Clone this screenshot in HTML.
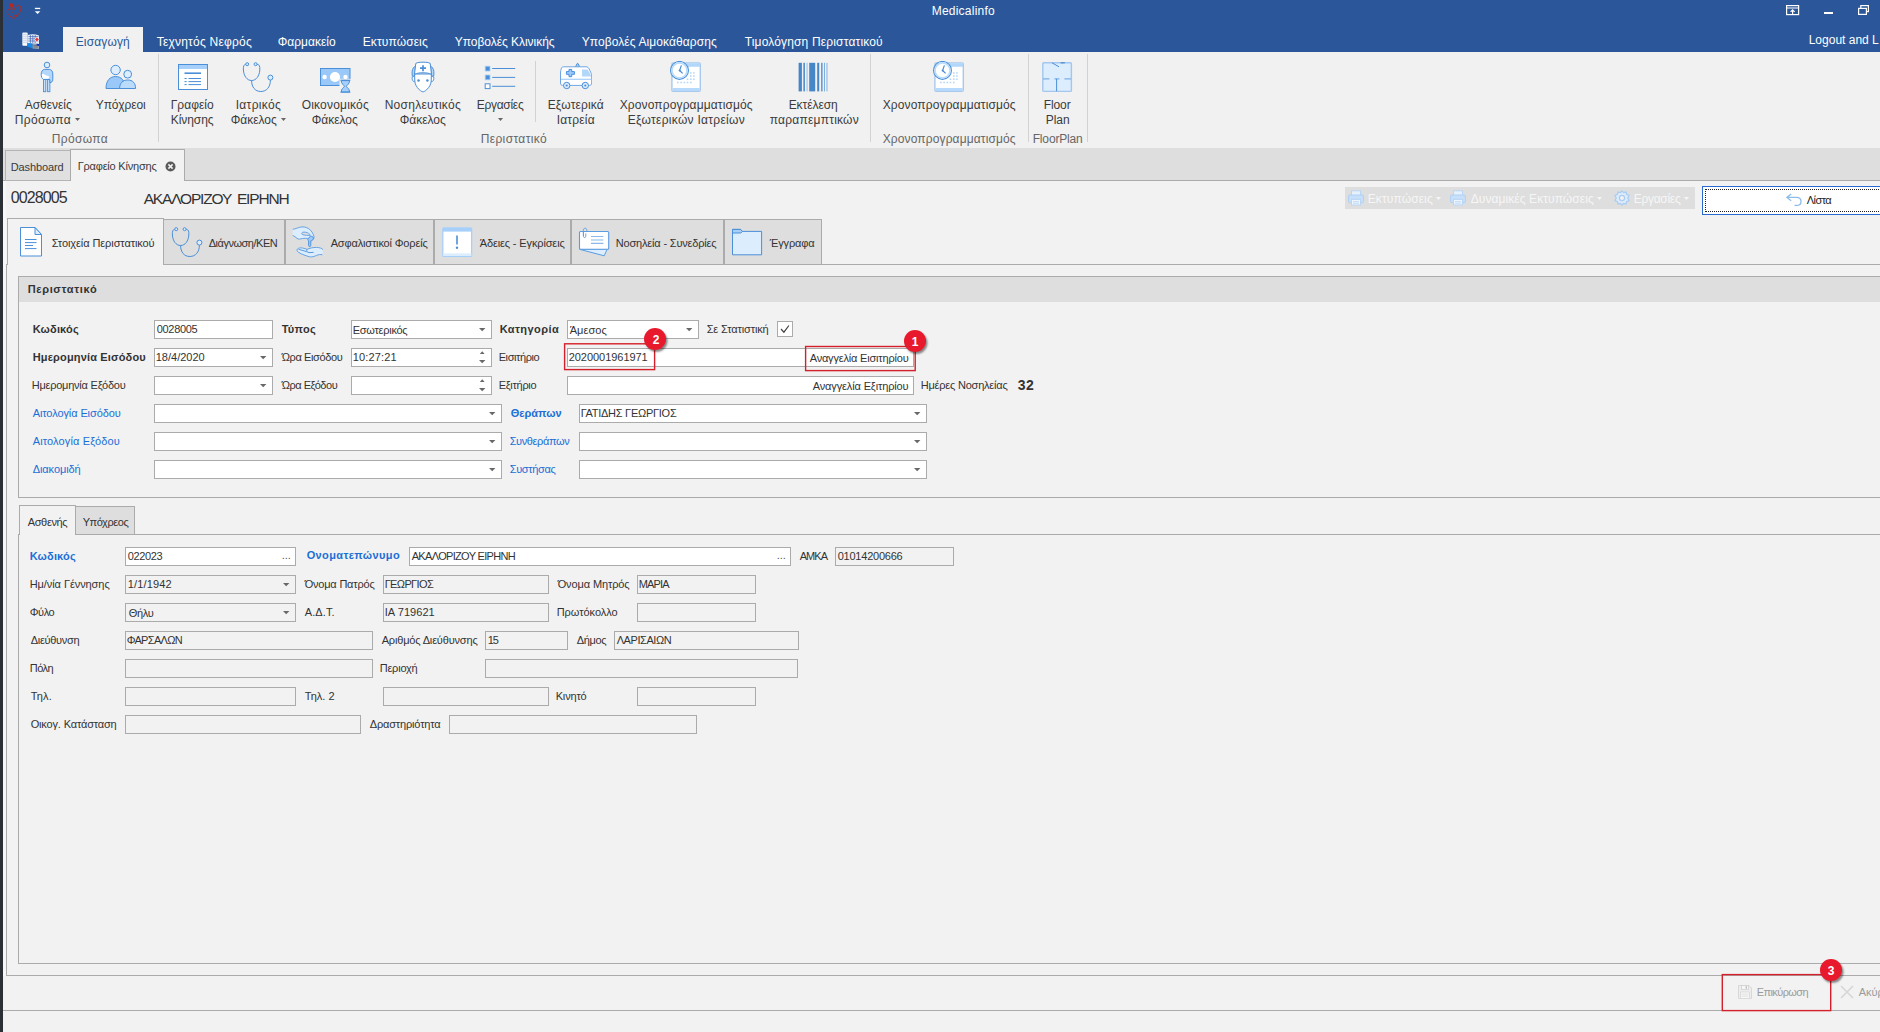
<!DOCTYPE html>
<html lang="el"><head><meta charset="utf-8"><title>Medicalinfo</title>
<style>
html,body{margin:0;padding:0}
body{width:1880px;height:1032px;overflow:hidden;position:relative;background:#F2F2F2;font-family:"Liberation Sans",sans-serif;color:#333333}
.b{position:absolute;box-sizing:border-box;display:block}
.t{position:absolute;white-space:nowrap;line-height:1;font-family:"Liberation Sans",sans-serif}
.s{font-family:"Liberation Serif",serif}
</style></head><body>
<div class="b" style="left:0px;top:0px;width:3px;height:1032px;background:#2B3037;"></div>
<div class="b" style="left:3px;top:0px;width:1877px;height:52px;background:#2B579A;"></div>
<div class="b" style="left:3px;top:52px;width:1877px;height:96px;background:#F1F1F1;"></div>
<div class="b" style="left:3px;top:148px;width:1877px;height:33px;background:#DEDEDE;"></div>
<div class="b" style="left:3px;top:180px;width:1877px;height:1px;background:#ABABAB;"></div>
<div class="b" style="left:3px;top:181px;width:1877px;height:851px;background:#F2F2F2;"></div>
<div class="b" style="left:3px;top:181px;width:3px;height:795px;background:#F7F7F7;"></div>
<svg class="b" style="left:6px;top:2px" width="17" height="18" viewBox="0 0 17 18"><path d="M6.8 7.2 C4.6 6.2 1.6 7 1.2 9.4 C0.9 12 4 14.6 7.8 16.6 C11 14.2 15 10.4 14.9 6.2 C14.8 3.2 12.6 2.6 10.8 4 C9 5.4 7.4 7.8 6.8 10.8" fill="none" stroke="#B8281E" stroke-width=".9"/><ellipse cx="5.6" cy="3.5" rx="1.7" ry="2.6" transform="rotate(-8 5.6 3.5)" fill="#B8281E"/><circle cx="9.6" cy="13.6" r="1.2" fill="#B8281E"/></svg>
<svg class="b" style="left:34px;top:7px" width="8" height="8" viewBox="0 0 8 8"><rect x="0.9" y="0.8" width="5.3" height="1.3" fill="#fff"/><path d="M0.8 4.3 L6.3 4.3 L3.55 7.1 Z" fill="#fff"/></svg>
<svg class="b" style="left:1786px;top:5px" width="14" height="11" viewBox="0 0 14 11"><rect x="0.6" y="0.6" width="12" height="9" fill="none" stroke="#fff" stroke-width="1.2"/><line x1="0.6" y1="3" x2="12.6" y2="3" stroke="#fff" stroke-width="1"/><path d="M6.6 9 L6.6 5 M4.6 6.8 L6.6 4.8 L8.6 6.8" fill="none" stroke="#fff" stroke-width="1.2"/></svg>
<div class="b" style="left:1824px;top:12px;width:9px;height:2px;background:#fff;"></div>
<svg class="b" style="left:1858px;top:5px" width="12" height="11" viewBox="0 0 12 11"><rect x="2.8" y="0.6" width="7.6" height="6" fill="none" stroke="#fff" stroke-width="1.2"/><rect x="0.6" y="3.4" width="7.8" height="6" fill="#2B579A" stroke="#fff" stroke-width="1.2"/></svg>
<svg class="b" style="left:22px;top:32px" width="18" height="18" viewBox="0 0 18 18"><rect x="0.3" y="0.4" width="5.4" height="13.4" rx="1" fill="#EEF2F8"/><path d="M1 2.4h4M1 4.4h4M1 6.4h4M1 8.4h4M1 10.4h4" stroke="#C3D1E6" stroke-width=".7"/><rect x="1" y="11.6" width="4" height="1.6" fill="#fff"/><path d="M5.8 3 C9 2 13 2 17 3.4 L17 12 L5.8 11.4 Z" fill="#E9EFF8"/><path d="M6.4 4.6h10M6.4 6.8h10M6.4 9h10M8.4 3v8M10.8 3v8M13.2 3v8" stroke="#3D63B0" stroke-width=".7"/><circle cx="14.9" cy="7.5" r="2.3" fill="#DDE9F8"/><path d="M14.9 5.4 L16.8 7.5 L14.9 9.6 L13 7.5 Z" fill="#E8312F"/><path d="M5.2 11 L10.6 11.6 L10.6 16.6 L5.2 14.6 Z" fill="#1787EA"/><path d="M10.6 11.6 L17 12 L17 17 L10.6 16.6 Z" fill="#9AA3AE"/><path d="M14.6 11.8 L17 12 L17 14 L14.6 13.8 Z" fill="#0A2FC0"/><path d="M11.4 13.4h4.6M11.4 15h4.6" stroke="#5A5F66" stroke-width=".7"/></svg>
<div class="b" style="left:63px;top:27px;width:80px;height:26px;background:#F1F1F1;"></div>
<div class="b" style="left:158px;top:54px;width:1px;height:88px;background:#D2D2D2;"></div>
<div class="b" style="left:535px;top:61px;width:1px;height:61px;background:#D2D2D2;"></div>
<div class="b" style="left:870px;top:54px;width:1px;height:88px;background:#D2D2D2;"></div>
<div class="b" style="left:1028px;top:54px;width:1px;height:88px;background:#D2D2D2;"></div>
<div class="b" style="left:1087px;top:54px;width:1px;height:88px;background:#D2D2D2;"></div>
<svg class="b" style="left:75px;top:118px" width="5" height="3" viewBox="0 0 5 3"><path d="M0 0 L5 0 L2.5 3 Z" fill="#666"/></svg>
<svg class="b" style="left:281px;top:118px" width="5" height="3" viewBox="0 0 5 3"><path d="M0 0 L5 0 L2.5 3 Z" fill="#666"/></svg>
<svg class="b" style="left:498px;top:118px" width="5" height="3" viewBox="0 0 5 3"><path d="M0 0 L5 0 L2.5 3 Z" fill="#666"/></svg>
<svg class="b" style="left:31px;top:61px" width="32" height="32" viewBox="0 0 32 32"><circle cx="16" cy="4" r="2.8" fill="#DCEDFE" stroke="#4A8FD8" stroke-width="1"/><rect x="12.5" y="18" width="2.3" height="12.7" fill="#C4E0FC" stroke="#4A8FD8" stroke-width=".9"/><rect x="16.6" y="18" width="2.3" height="12.7" fill="#C4E0FC" stroke="#4A8FD8" stroke-width=".9"/><path d="M13.6 8.4 L18.4 8.4 C20.4 8.4 21.8 10.4 21.8 13 L21.8 18.8 C21.8 20.4 20.4 21.6 18.9 21.8 L18.9 18.5 L12.5 18.5 C10.9 17.6 10.2 15.6 10.2 13.4 C10.2 10.4 11.6 8.4 13.6 8.4 Z" fill="#B3D7FB" stroke="#4A8FD8" stroke-width="1"/><path d="M10.9 13.3 C12.4 12.7 13.6 13.6 14.6 14.3 C15.8 15 17.2 14.7 18 15.4 C18.5 16.4 17.6 17.6 16.4 17.8 L12.3 17.8 C11.1 17 10.7 15 10.9 13.3 Z" fill="#fff"/></svg>
<svg class="b" style="left:105px;top:61px" width="32" height="32" viewBox="0 0 32 32"><circle cx="10.6" cy="9" r="4.7" fill="#DCEDFE" stroke="#4A8FD8" stroke-width="1"/><path d="M1 27.5 C1 19.5 5 15.5 10.6 15.5 C16.2 15.5 20.2 19.5 20.2 27.5 Z" fill="#9AC9F9" stroke="#4A8FD8" stroke-width="1"/><circle cx="22.7" cy="13.2" r="3.9" fill="#DCEDFE" stroke="#4A8FD8" stroke-width="1"/><path d="M14.6 27.5 C14.6 22 17.8 19 22.7 19 C27.6 19 30.6 22 30.6 27.5 Z" fill="#BBDBFB" stroke="#4A8FD8" stroke-width="1"/></svg>
<svg class="b" style="left:177px;top:61px" width="32" height="32" viewBox="0 0 32 32"><rect x="1.5" y="3.5" width="29" height="25" fill="#fff" stroke="#4A8FD8" stroke-width="1"/><rect x="2" y="4" width="28" height="4" fill="#A6CFFA"/><path d="M7.5 12.2h16.5" stroke="#4A8FD8" stroke-width="1.6"/><path d="M7.5 17.5h2.2M11.5 17.5h12.5M7.5 20.6h2.2M11.5 20.6h12.5M7.5 23.6h2.2M11.5 23.6h12.5" stroke="#4A8FD8" stroke-width="1"/></svg>
<svg class="b" style="left:242px;top:61px" width="32" height="32" viewBox="0 0 32 32"><path d="M4.2 3.3 C1.6 3.3 1.2 5.5 1.4 9 C1.8 15 5 19.5 9.6 19.5 C14.2 19.5 17.4 15 17.8 9 C18 5.5 17.6 3.3 15 3.3" fill="none" stroke="#4A8FD8" stroke-width="1"/><path d="M9.6 19.5 C9.6 26 13 30.5 18.8 30.5 C24.6 30.5 28.4 26 28.4 19.2" fill="none" stroke="#4A8FD8" stroke-width="1"/><circle cx="5.2" cy="3.2" r="1.5" fill="#DCEDFE" stroke="#4A8FD8" stroke-width="1"/><circle cx="13.6" cy="3.2" r="1.5" fill="#DCEDFE" stroke="#4A8FD8" stroke-width="1"/><circle cx="28.4" cy="16.6" r="2.5" fill="#DCEDFE" stroke="#4A8FD8" stroke-width="1"/></svg>
<svg class="b" style="left:319px;top:61px" width="32" height="32" viewBox="0 0 32 32"><rect x="1.5" y="7.5" width="29.5" height="17" fill="#9AC9F9" stroke="#4A8FD8" stroke-width="1"/><circle cx="16" cy="16" r="5.1" fill="#fff"/><circle cx="5.6" cy="16" r="2.2" fill="#fff"/><circle cx="26.5" cy="16" r="2.2" fill="#fff"/><rect x="20.5" y="17.8" width="12" height="14" fill="#F1F1F1"/><path d="M22.2 19.6 L30.6 19.6 C30.6 23 27.8 24 27.4 25.3 C27.8 26.6 30.6 27.6 30.6 31 L22.2 31 C22.2 27.6 25 26.6 25.4 25.3 C25 24 22.2 23 22.2 19.6 Z" fill="#A6CFFA" stroke="#4A8FD8" stroke-width="1"/><path d="M21.4 19.2h10M21.4 31.2h10" stroke="#4A8FD8" stroke-width="1" stroke-width="1.2"/></svg>
<svg class="b" style="left:407px;top:61px" width="32" height="32" viewBox="0 0 32 32"><path d="M7.6 5.6 C5.6 7.4 5 9.6 5.1 12 L5.3 15.4 L7.8 15 L8.4 6 Z M24.4 5.6 C26.4 7.4 27 9.6 26.9 12 L26.7 15.4 L24.2 15 L23.6 6 Z" fill="#B3D7FB" stroke="#4A8FD8" stroke-width="1"/><path d="M7.4 15.2 C5.2 14.6 4.8 17 5.4 18.8 C5.9 20.2 6.8 20.8 7.8 20.6 M24.6 15.2 C26.8 14.6 27.2 17 26.6 18.8 C26.1 20.2 25.2 20.8 24.2 20.6" fill="#fff" stroke="#4A8FD8" stroke-width="1"/><path d="M7.6 13 L7.8 20 C8 23 9.4 26 12.4 28.8 C13.8 30 15 30.8 16 30.8 C17 30.8 18.2 30 19.6 28.8 C22.6 26 24 23 24.2 20 L24.4 13 Z" fill="#fff" stroke="#4A8FD8" stroke-width="1"/><path d="M8.8 2.4 C10.4 1.4 13 1.2 16 1.2 C19 1.2 21.6 1.4 23.2 2.4 L24.5 13.2 C21.6 12 18.8 11.8 16 11.8 C13.2 11.8 10.4 12 7.5 13.2 Z" fill="#fff" stroke="#4A8FD8" stroke-width="1"/><path d="M16 4.2v6M13 7.2h6" stroke="#4A8FD8" stroke-width="1.7"/><circle cx="11.5" cy="19.4" r="1.25" fill="#4A8FD8"/><circle cx="20.4" cy="19.4" r="1.25" fill="#4A8FD8"/></svg>
<svg class="b" style="left:484px;top:61px" width="32" height="32" viewBox="0 0 32 32"><rect x="1.2" y="5.2" width="4.8" height="4.8" fill="#4A8FD8" stroke="#A6CFFA" stroke-width=".8"/><rect x="1.2" y="14" width="4.8" height="4.8" fill="#4A8FD8" stroke="#A6CFFA" stroke-width=".8"/><rect x="1.2" y="22.8" width="4.8" height="4.8" fill="#fff" stroke="#4A8FD8" stroke-width="1"/><path d="M8.2 7.5h23M8.2 16.4h23M8.2 25.3h23" stroke="#4A8FD8" stroke-width="1"/></svg>
<svg class="b" style="left:560px;top:61px" width="32" height="32" viewBox="0 0 32 32"><path d="M15.4 6 L17 2.8 C17.3 2.2 17.9 2.2 18.2 2.8 L19.8 6 Z" fill="#A6CFFA" stroke="#4A8FD8" stroke-width="1"/><path d="M3.5 5.8 L26 5.8 C27.6 5.8 28.4 6.6 29.2 8 L31.2 12.4 C31.6 13.2 31.7 14 31.7 15 L31.7 22 C31.7 23.6 30.8 24.4 29.4 24.4 L2.8 24.4 C1.4 24.4 0.5 23.6 0.5 22 L0.5 11 C0.5 9.6 1.2 9 1.2 8 C1.2 6.6 2.2 5.8 3.5 5.8 Z" fill="#fff" stroke="#6FA6E2" stroke-width="1"/><path d="M22 8.4 L27.6 8.4 L31 14.2 L31 15.6 L22 15.6 Z" fill="#B3D7FB"/><path d="M1 18.3h30.4" stroke="#A6CFFA" stroke-width="1.2"/><path d="M9 8.4h2.7v2.2h2.7v2.7h-2.7v2.4h-2.7v-2.4h-2.6v-2.7h2.6z" fill="#9CCAFA" stroke="#4A8FD8" stroke-width="1"/><circle cx="6.7" cy="24.5" r="3.2" fill="#DCEDFE" stroke="#4A8FD8" stroke-width="1"/><circle cx="6.7" cy="24.5" r="1.1" fill="#4A8FD8"/><circle cx="25.3" cy="24.5" r="3.2" fill="#DCEDFE" stroke="#4A8FD8" stroke-width="1"/><circle cx="25.3" cy="24.5" r="1.1" fill="#4A8FD8"/></svg>
<svg class="b" style="left:670px;top:61px" width="32" height="32" viewBox="0 0 32 32"><rect x="1.9" y="1.9" width="28.4" height="28.4" rx="1.2" fill="#fff" stroke="#A9C9EC" stroke-width="1.4"/><rect x="2.2" y="2.2" width="27.8" height="3.6" fill="#B3D7FB"/><rect x="2.6" y="27" width="27" height="3" fill="#B7D9FB"/><path d="M20.0 11.9h1.6M23.1 11.9h1.6M20.0 15.0h1.6M23.1 15.0h1.6M16.7 18.3h1.6M20.0 18.3h1.6M23.1 18.3h1.6M7.0 21.6h1.6M10.3 21.6h1.6M13.6 21.6h1.6M16.7 21.6h1.6M20.0 21.6h1.6" stroke="#B5D6F8" stroke-width="1.5"/><circle cx="9.5" cy="9.4" r="8.9" fill="#fff" stroke="#4A8FD8" stroke-width="1.2"/><circle cx="9.5" cy="9.4" r="7.5" fill="none" stroke="#B9DBFC" stroke-width="1.6"/><path d="M11.4 4.4 L9.6 9.5 L12.6 12.4" fill="none" stroke="#4A8FD8" stroke-width="1.2"/><circle cx="9.6" cy="9.5" r="1" fill="#4A8FD8"/></svg>
<svg class="b" style="left:933px;top:61px" width="32" height="32" viewBox="0 0 32 32"><rect x="1.9" y="1.9" width="28.4" height="28.4" rx="1.2" fill="#fff" stroke="#A9C9EC" stroke-width="1.4"/><rect x="2.2" y="2.2" width="27.8" height="3.6" fill="#B3D7FB"/><rect x="2.6" y="27" width="27" height="3" fill="#B7D9FB"/><path d="M20.0 11.9h1.6M23.1 11.9h1.6M20.0 15.0h1.6M23.1 15.0h1.6M16.7 18.3h1.6M20.0 18.3h1.6M23.1 18.3h1.6M7.0 21.6h1.6M10.3 21.6h1.6M13.6 21.6h1.6M16.7 21.6h1.6M20.0 21.6h1.6" stroke="#B5D6F8" stroke-width="1.5"/><circle cx="9.5" cy="9.4" r="8.9" fill="#fff" stroke="#4A8FD8" stroke-width="1.2"/><circle cx="9.5" cy="9.4" r="7.5" fill="none" stroke="#B9DBFC" stroke-width="1.6"/><path d="M11.4 4.4 L9.6 9.5 L12.6 12.4" fill="none" stroke="#4A8FD8" stroke-width="1.2"/><circle cx="9.6" cy="9.5" r="1" fill="#4A8FD8"/></svg>
<svg class="b" style="left:798px;top:61px" width="32" height="32" viewBox="0 0 32 32"><rect x="0.6" y="1.8" width="3.3" height="28.6" fill="#4787C8"/><rect x="5.4" y="1.8" width="1.5" height="28.6" fill="#4787C8"/><rect x="8.4" y="1.8" width="1.3" height="28.6" fill="#A9C8EA"/><rect x="11.2" y="1.8" width="6" height="28.6" fill="#4787C8"/><rect x="19.2" y="1.8" width="2" height="28.6" fill="#4787C8"/><rect x="23.1" y="1.8" width="1.5" height="28.6" fill="#5D97D2"/><rect x="26" y="1.8" width="1" height="28.6" fill="#7FADDC"/><rect x="28.2" y="1.8" width="1.5" height="28.6" fill="#A9C8EA"/></svg>
<svg class="b" style="left:1041px;top:61px" width="32" height="32" viewBox="0 0 32 32"><rect x="1.8" y="1.8" width="28.6" height="28.6" rx="1" fill="#DCEDFE" stroke="#A3C6EE" stroke-width="1.4"/><path d="M2 17.8h6.4M13.4 17.8h5M23.4 17.8h6.6" stroke="#7FB0E6" stroke-width="1.2"/><path d="M15.6 17.8v12.4" stroke="#4A8FD8" stroke-width="1"/><path d="M11 1.8 L18 5.8" stroke="#4A8FD8" stroke-width="1"/><path d="M19.6 1.8h4.2" stroke="#4A8FD8" stroke-width="1.3"/></svg>
<div class="b" style="left:5px;top:150px;width:66px;height:31px;background:#E0E0E0;border:1px solid #B4B4B4;"></div>
<div class="b" style="left:70px;top:149px;width:115px;height:32px;background:#F2F2F2;border:1px solid #ABABAB;border-bottom:none;"></div>
<svg class="b" style="left:165px;top:161px" width="11" height="11" viewBox="0 0 11 11"><circle cx="5.5" cy="5.5" r="5" fill="#5A5A5A"/><path d="M3.4 3.4 L7.6 7.6 M7.6 3.4 L3.4 7.6" stroke="#F2F2F2" stroke-width="1.5"/></svg>
<div class="b" style="left:1345px;top:187px;width:350px;height:22px;background:#DEDEDE;"></div>
<svg class="b" style="left:1436px;top:197px" width="5" height="3" viewBox="0 0 5 3"><path d="M0 0 L5 0 L2.5 3 Z" fill="#F6F6F6"/></svg>
<svg class="b" style="left:1597px;top:197px" width="5" height="3" viewBox="0 0 5 3"><path d="M0 0 L5 0 L2.5 3 Z" fill="#F6F6F6"/></svg>
<svg class="b" style="left:1684px;top:197px" width="5" height="3" viewBox="0 0 5 3"><path d="M0 0 L5 0 L2.5 3 Z" fill="#F6F6F6"/></svg>
<svg class="b" style="left:1348px;top:190px" width="16" height="16" viewBox="0 0 16 16"><rect x="3.5" y="0.8" width="9" height="5" fill="#E6F1FD" stroke="#B9D6F5" stroke-width="1"/><rect x="0.6" y="5" width="14.8" height="7.6" rx="1" fill="#C7DFF8" stroke="#B0D0F3" stroke-width="1"/><rect x="3.5" y="9.4" width="9" height="5.6" fill="#EEF5FD" stroke="#B9D6F5" stroke-width="1"/><path d="M5 11.6h6M5 13.2h6" stroke="#B9D6F5" stroke-width=".8"/></svg>
<svg class="b" style="left:1450px;top:190px" width="16" height="16" viewBox="0 0 16 16"><rect x="3.5" y="0.8" width="9" height="5" fill="#E6F1FD" stroke="#B9D6F5" stroke-width="1"/><rect x="0.6" y="5" width="14.8" height="7.6" rx="1" fill="#C7DFF8" stroke="#B0D0F3" stroke-width="1"/><rect x="3.5" y="9.4" width="9" height="5.6" fill="#EEF5FD" stroke="#B9D6F5" stroke-width="1"/><path d="M5 11.6h6M5 13.2h6" stroke="#B9D6F5" stroke-width=".8"/></svg>
<svg class="b" style="left:1614px;top:190px" width="16" height="16" viewBox="0 0 16 16"><g fill="none" stroke="#A9CDF3" stroke-width="1.3"><circle cx="8" cy="8" r="2.6"/><path d="M8 1 L9.6 2.6 L12 2 L12.6 4.4 L15 5.4 L13.8 8 L15 10.6 L12.6 11.6 L12 14 L9.6 13.4 L8 15 L6.4 13.4 L4 14 L3.4 11.6 L1 10.6 L2.2 8 L1 5.4 L3.4 4.4 L4 2 L6.4 2.6 Z" fill="#DDEBFA"/><circle cx="8" cy="8" r="2.6" fill="#F2F2F2"/></g></svg>
<div class="b" style="left:1702px;top:186px;width:190px;height:29px;background:#FFFFFF;border:1px solid #2A6BD1;"></div>
<div class="b" style="left:1705px;top:189px;width:190px;height:23px;border:1px dotted #222;"></div>
<svg class="b" style="left:1786px;top:193px" width="16" height="14" viewBox="0 0 16 14"><path d="M5.2 1 L0.8 4.4 L5.2 7.8 M0.8 4.4 L10.5 4.4 C13.5 4.4 15 6 15 8.4 C15 10.8 13.5 12.4 10.5 12.4 L8.5 12.4" fill="none" stroke="#8DBBEA" stroke-width="1.3"/></svg>
<div class="b" style="left:6px;top:264px;width:1874px;height:1px;background:#ABABAB;"></div>
<div class="b" style="left:6px;top:264px;width:1px;height:712px;background:#ABABAB;"></div>
<div class="b" style="left:6px;top:975px;width:1874px;height:1px;background:#ABABAB;"></div>
<div class="b" style="left:7px;top:218px;width:157px;height:47px;background:#F2F2F2;border:1px solid #ABABAB;border-bottom:none;"></div>
<div class="b" style="left:163px;top:219px;width:122px;height:46px;background:#DEDEDE;border:1px solid #ABABAB;"></div>
<div class="b" style="left:285px;top:219px;width:149px;height:46px;background:#DEDEDE;border:1px solid #ABABAB;"></div>
<div class="b" style="left:434px;top:219px;width:137px;height:46px;background:#DEDEDE;border:1px solid #ABABAB;"></div>
<div class="b" style="left:571px;top:219px;width:153px;height:46px;background:#DEDEDE;border:1px solid #ABABAB;"></div>
<div class="b" style="left:724px;top:219px;width:98px;height:46px;background:#DEDEDE;border:1px solid #ABABAB;"></div>
<svg class="b" style="left:19px;top:226px" width="24" height="32" viewBox="0 0 24 32"><path d="M1.5 1.5 L16 1.5 L22.5 8.5 L22.5 30 L1.5 30 Z" fill="#fff" stroke="#4A8FD8" stroke-width="1"/><path d="M16 1.5 L16 8.5 L22.5 8.5 Z" fill="#DCEDFE" stroke="#4A8FD8" stroke-width="1"/><path d="M6 13.5h11.5M6 16.6h11.5M6 19.5h8M6 22.6h11.5" stroke="#4A8FD8" stroke-width="1"/></svg>
<svg class="b" style="left:171px;top:226px" width="32" height="32" viewBox="0 0 32 32"><path d="M4.2 3.3 C1.6 3.3 1.2 5.5 1.4 9 C1.8 15 5 19.5 9.6 19.5 C14.2 19.5 17.4 15 17.8 9 C18 5.5 17.6 3.3 15 3.3" fill="none" stroke="#4A8FD8" stroke-width="1"/><path d="M9.6 19.5 C9.6 26 13 30.5 18.8 30.5 C24.6 30.5 28.4 26 28.4 19.2" fill="none" stroke="#4A8FD8" stroke-width="1"/><circle cx="5.2" cy="3.2" r="1.5" fill="#DCEDFE" stroke="#4A8FD8" stroke-width="1"/><circle cx="13.6" cy="3.2" r="1.5" fill="#DCEDFE" stroke="#4A8FD8" stroke-width="1"/><circle cx="28.4" cy="16.6" r="2.5" fill="#DCEDFE" stroke="#4A8FD8" stroke-width="1"/></svg>
<svg class="b" style="left:292px;top:226px" width="32" height="32" viewBox="0 0 32 32"><path d="M0.8 3.2 C3 3.2 5 2 7.5 1.3 C11 0.4 14 1 16.5 2.6 C19.5 4.4 21 7.4 22 10.6 C22.3 12 21.4 13.4 20 13.8 L17 13.2 C15 12 12.5 12.2 10.2 12.6 C8 13 6.6 13.6 5 12.4 C3.6 11.2 2.4 10 0.8 9.6 Z" fill="#DCEDFE"/><path d="M0.8 3.2 C3 3.2 5 2 7.5 1.3 C11 0.4 14 1 16.5 2.6 C19.5 4.4 21 7.4 22 10.6 C22.3 12 21.4 13.4 20 13.8 L17 13.2 C15 12 12.5 12.2 10.2 12.6 C8 13 6.6 13.6 5 12.4 C3.6 11.2 2.4 10 0.8 9.6" fill="none" stroke="#5B9BE0" stroke-width=".9"/><path d="M10.4 6.4 C12.4 5.8 15 6.2 16.6 7.4 C17.6 8.2 18.6 9 18.4 9.4 C16 9.6 13 9.2 11 8.8 C9.6 8.4 9.4 6.8 10.4 6.4 Z" fill="#DEDEDE" stroke="#5B9BE0" stroke-width=".9"/><path d="M16.4 12.6 C17 10.6 19.6 9.6 20.8 10.8 C22 12 21.4 14 19.8 14.6 L18.8 14.8 L18.8 19.6 C18.8 21 16.6 21 16.6 19.6 L16.6 14.8 C15.6 14.4 15.4 13.4 16.4 12.6 Z" fill="#9CCAFA" stroke="#4A8FD8" stroke-width=".9"/><path d="M30.4 28.8 C28.6 28.2 26.6 28.6 24.6 29.4 C22.4 30.4 20 31.2 17.6 30.8 C14.4 30 9.6 28.2 6.6 26.4 C5 25.4 4.6 24 5.4 23 C6.6 22 8.6 21.6 10.6 22 C12.4 22.4 14 23 15 23.4 C17.4 22.2 21 21.4 24.4 21.4 C27.4 21.4 29.6 22.2 31 23.6 Z" fill="#DCEDFE"/><path d="M30.4 28.8 C28.6 28.2 26.6 28.6 24.6 29.4 C22.4 30.4 20 31.2 17.6 30.8 C14.4 30 9.6 28.2 6.6 26.4 C5 25.4 4.6 24 5.4 23 C6.6 22 8.6 21.6 10.6 22 C12.4 22.4 14 23 15 23.4 C17.4 22.2 21 21.4 24.4 21.4 C27.4 21.4 29.6 22.2 31 23.6" fill="none" stroke="#5B9BE0" stroke-width=".9"/><path d="M6.6 23.4 C9.6 24 12.6 25 14.8 25.8 M14.8 23.6 C14.4 25.2 15.2 26.4 17 26.6 L21.6 26.4" fill="none" stroke="#4A8FD8" stroke-width=".9"/></svg>
<svg class="b" style="left:441px;top:226px" width="32" height="32" viewBox="0 0 32 32"><rect x="1.8" y="1.8" width="28.8" height="28.6" rx="1" fill="#fff" stroke="#A6CFFA" stroke-width="1.3"/><rect x="2" y="2" width="28.4" height="3.6" fill="#A6CFFA"/><rect x="2" y="27.4" width="28.4" height="2.6" fill="#DCEDFE"/><path d="M16 9.6v9" stroke="#4A8FD8" stroke-width="1.6"/><circle cx="16" cy="21.8" r="1.2" fill="#4A8FD8"/></svg>
<svg class="b" style="left:578px;top:226px" width="32" height="32" viewBox="0 0 32 32"><path d="M1.8 23.4 L26.2 29.8 L29.2 23.2 Z" fill="#DCEDFE" stroke="#5B9BE0" stroke-width="1"/><rect x="1.5" y="5.5" width="29.2" height="17.8" rx="1" fill="#fff" stroke="#5B9BE0" stroke-width="1.1"/><path d="M13 10.5h12.4M13 17.4h12.4" stroke="#8DB8E8" stroke-width="1.1"/><path d="M13 14h12.4" stroke="#B5D2F0" stroke-width="1.6"/><path d="M5.4 10 L5.4 4.2 C5.4 1.6 8.8 1.6 8.8 4.2 L8.8 5.4 M5.4 5 L5.4 10.2 C5.4 12 7.8 12 7.8 10.2 L7.8 7.4" fill="none" stroke="#5B9BE0" stroke-width=".9"/></svg>
<svg class="b" style="left:731px;top:226px" width="32" height="32" viewBox="0 0 32 32"><path d="M1.5 3.4 L9.6 3.4 L11.4 5.4 L30.6 5.4 L30.6 28.8 L1.5 28.8 Z" fill="#DCEDFE" stroke="#4A8FD8" stroke-width="1"/><path d="M1.5 3.4 L9.6 3.4 L11.4 5.4 L9.8 7 L1.5 7 Z" fill="#A6CFFA" stroke="#4A8FD8" stroke-width="1"/></svg>
<div class="b" style="left:18px;top:276px;width:1880px;height:222px;border:1px solid #ABABAB;"></div>
<div class="b" style="left:19px;top:277px;width:1861px;height:25px;background:#DEDEDE;"></div>
<div class="b" style="left:154px;top:320px;width:119px;height:19px;background:#FFFFFF;border:1px solid #ABABAB;"></div>
<div class="b" style="left:351px;top:320px;width:141px;height:19px;background:#FFFFFF;border:1px solid #ABABAB;"></div>
<svg class="b" style="left:479px;top:328px" width="7" height="4" viewBox="0 0 7 4"><path d="M0 0 L6.4 0 L3.2 3.2 Z" fill="#686868"/></svg>
<div class="b" style="left:567px;top:320px;width:132px;height:19px;background:#FFFFFF;border:1px solid #ABABAB;"></div>
<svg class="b" style="left:686px;top:328px" width="7" height="4" viewBox="0 0 7 4"><path d="M0 0 L6.4 0 L3.2 3.2 Z" fill="#686868"/></svg>
<div class="b" style="left:777px;top:321px;width:16px;height:16px;background:#fff;border:1px solid #ABABAB;"></div>
<svg class="b" style="left:780px;top:323px" width="11" height="11" viewBox="0 0 11 11"><path d="M1 6 L3.9 9.2 L8.9 2.5" fill="none" stroke="#444" stroke-width="1.2"/></svg>
<div class="b" style="left:154px;top:348px;width:119px;height:19px;background:#FFFFFF;border:1px solid #ABABAB;"></div>
<svg class="b" style="left:260px;top:356px" width="7" height="4" viewBox="0 0 7 4"><path d="M0 0 L6.4 0 L3.2 3.2 Z" fill="#686868"/></svg>
<div class="b" style="left:351px;top:348px;width:141px;height:19px;background:#FFFFFF;border:1px solid #ABABAB;"></div>
<svg class="b" style="left:479px;top:351px" width="7" height="3" viewBox="0 0 7 3"><path d="M0.8 3 L5.6 3 L3.2 0.3 Z" fill="#686868"/></svg>
<svg class="b" style="left:479px;top:360px" width="7" height="4" viewBox="0 0 7 4"><path d="M0 0 L6.4 0 L3.2 3.2 Z" fill="#686868"/></svg>
<div class="b" style="left:567px;top:348px;width:347px;height:19px;background:#FFFFFF;border:1px solid #ABABAB;"></div>
<div class="b" style="left:154px;top:376px;width:119px;height:19px;background:#FFFFFF;border:1px solid #ABABAB;"></div>
<svg class="b" style="left:260px;top:384px" width="7" height="4" viewBox="0 0 7 4"><path d="M0 0 L6.4 0 L3.2 3.2 Z" fill="#686868"/></svg>
<div class="b" style="left:351px;top:376px;width:141px;height:19px;background:#FFFFFF;border:1px solid #ABABAB;"></div>
<svg class="b" style="left:479px;top:379px" width="7" height="3" viewBox="0 0 7 3"><path d="M0.8 3 L5.6 3 L3.2 0.3 Z" fill="#686868"/></svg>
<svg class="b" style="left:479px;top:388px" width="7" height="4" viewBox="0 0 7 4"><path d="M0 0 L6.4 0 L3.2 3.2 Z" fill="#686868"/></svg>
<div class="b" style="left:567px;top:376px;width:347px;height:19px;background:#FFFFFF;border:1px solid #ABABAB;"></div>
<div class="b" style="left:154px;top:404px;width:348px;height:19px;background:#FFFFFF;border:1px solid #ABABAB;"></div>
<svg class="b" style="left:489px;top:412px" width="7" height="4" viewBox="0 0 7 4"><path d="M0 0 L6.4 0 L3.2 3.2 Z" fill="#686868"/></svg>
<div class="b" style="left:579px;top:404px;width:348px;height:19px;background:#FFFFFF;border:1px solid #ABABAB;"></div>
<svg class="b" style="left:914px;top:412px" width="7" height="4" viewBox="0 0 7 4"><path d="M0 0 L6.4 0 L3.2 3.2 Z" fill="#686868"/></svg>
<div class="b" style="left:154px;top:432px;width:348px;height:19px;background:#FFFFFF;border:1px solid #ABABAB;"></div>
<svg class="b" style="left:489px;top:440px" width="7" height="4" viewBox="0 0 7 4"><path d="M0 0 L6.4 0 L3.2 3.2 Z" fill="#686868"/></svg>
<div class="b" style="left:579px;top:432px;width:348px;height:19px;background:#FFFFFF;border:1px solid #ABABAB;"></div>
<svg class="b" style="left:914px;top:440px" width="7" height="4" viewBox="0 0 7 4"><path d="M0 0 L6.4 0 L3.2 3.2 Z" fill="#686868"/></svg>
<div class="b" style="left:154px;top:460px;width:348px;height:19px;background:#FFFFFF;border:1px solid #ABABAB;"></div>
<svg class="b" style="left:489px;top:468px" width="7" height="4" viewBox="0 0 7 4"><path d="M0 0 L6.4 0 L3.2 3.2 Z" fill="#686868"/></svg>
<div class="b" style="left:579px;top:460px;width:348px;height:19px;background:#FFFFFF;border:1px solid #ABABAB;"></div>
<svg class="b" style="left:914px;top:468px" width="7" height="4" viewBox="0 0 7 4"><path d="M0 0 L6.4 0 L3.2 3.2 Z" fill="#686868"/></svg>
<div class="b" style="left:19px;top:534px;width:1861px;height:1px;background:#ABABAB;"></div>
<div class="b" style="left:18px;top:534px;width:1px;height:430px;background:#ABABAB;"></div>
<div class="b" style="left:18px;top:963px;width:1862px;height:1px;background:#ABABAB;"></div>
<div class="b" style="left:19px;top:505px;width:57px;height:30px;background:#F2F2F2;border:1px solid #ABABAB;border-bottom:none;"></div>
<div class="b" style="left:75px;top:506px;width:60px;height:29px;background:#DEDEDE;border:1px solid #ABABAB;"></div>
<div class="b" style="left:125px;top:547px;width:171px;height:19px;background:#FFFFFF;border:1px solid #ABABAB;"></div>
<div class="b" style="left:409px;top:547px;width:382px;height:19px;background:#FFFFFF;border:1px solid #ABABAB;"></div>
<div class="b" style="left:835px;top:547px;width:119px;height:19px;background:#F2F2F2;border:1px solid #ABABAB;"></div>
<div class="b" style="left:125px;top:575px;width:171px;height:19px;background:#F2F2F2;border:1px solid #ABABAB;"></div>
<svg class="b" style="left:283px;top:583px" width="7" height="4" viewBox="0 0 7 4"><path d="M0 0 L6.4 0 L3.2 3.2 Z" fill="#686868"/></svg>
<div class="b" style="left:383px;top:575px;width:166px;height:19px;background:#F2F2F2;border:1px solid #ABABAB;"></div>
<div class="b" style="left:637px;top:575px;width:119px;height:19px;background:#F2F2F2;border:1px solid #ABABAB;"></div>
<div class="b" style="left:125px;top:603px;width:171px;height:19px;background:#F2F2F2;border:1px solid #ABABAB;"></div>
<svg class="b" style="left:283px;top:611px" width="7" height="4" viewBox="0 0 7 4"><path d="M0 0 L6.4 0 L3.2 3.2 Z" fill="#686868"/></svg>
<div class="b" style="left:383px;top:603px;width:166px;height:19px;background:#F2F2F2;border:1px solid #ABABAB;"></div>
<div class="b" style="left:637px;top:603px;width:119px;height:19px;background:#F2F2F2;border:1px solid #ABABAB;"></div>
<div class="b" style="left:125px;top:631px;width:248px;height:19px;background:#F2F2F2;border:1px solid #ABABAB;"></div>
<div class="b" style="left:485px;top:631px;width:83px;height:19px;background:#F2F2F2;border:1px solid #ABABAB;"></div>
<div class="b" style="left:614px;top:631px;width:185px;height:19px;background:#F2F2F2;border:1px solid #ABABAB;"></div>
<div class="b" style="left:125px;top:659px;width:248px;height:19px;background:#F2F2F2;border:1px solid #ABABAB;"></div>
<div class="b" style="left:485px;top:659px;width:313px;height:19px;background:#F2F2F2;border:1px solid #ABABAB;"></div>
<div class="b" style="left:125px;top:687px;width:171px;height:19px;background:#F2F2F2;border:1px solid #ABABAB;"></div>
<div class="b" style="left:383px;top:687px;width:166px;height:19px;background:#F2F2F2;border:1px solid #ABABAB;"></div>
<div class="b" style="left:637px;top:687px;width:119px;height:19px;background:#F2F2F2;border:1px solid #ABABAB;"></div>
<div class="b" style="left:125px;top:715px;width:236px;height:19px;background:#F2F2F2;border:1px solid #ABABAB;"></div>
<div class="b" style="left:449px;top:715px;width:248px;height:19px;background:#F2F2F2;border:1px solid #ABABAB;"></div>
<div class="b" style="left:3px;top:1010px;width:1877px;height:1px;background:#ABABAB;"></div>
<svg class="b" style="left:1737px;top:984px" width="16" height="16" viewBox="0 0 16 16"><path d="M1.5 1.5 L12 1.5 L14.5 4 L14.5 14.5 L1.5 14.5 Z" fill="#EDEDED" stroke="#D8D8D8" stroke-width="1"/><rect x="4.5" y="1.5" width="7" height="4" fill="#F6F6F6" stroke="#D0D0D0" stroke-width=".8"/><rect x="8.6" y="2.2" width="1.4" height="2.4" fill="#BDBDBD"/><rect x="3.5" y="8" width="9" height="6.5" fill="#F8F8F8" stroke="#D8D8D8" stroke-width=".8"/><path d="M4.6 10.2h6.8M4.6 12.2h6.8" stroke="#DADADA" stroke-width=".8"/></svg>
<svg class="b" style="left:1840px;top:985px" width="14" height="14" viewBox="0 0 14 14"><path d="M1 1 L13 13 M13 1 L1 13" stroke="#D6D6D6" stroke-width="1.6" fill="none"/></svg>
<svg class="b" style="left:563px;top:342px" width="94" height="30" viewBox="0 0 94 30"><rect x="1.60" y="1.80" width="90.00" height="25.80" fill="none" stroke="#D3202B" stroke-width="1.4"/></svg>
<svg class="b" style="left:804px;top:345px" width="114" height="28" viewBox="0 0 114 28"><rect x="1.60" y="1.50" width="109.60" height="24.10" fill="none" stroke="#D3202B" stroke-width="1.4"/></svg>
<svg class="b" style="left:1721px;top:973px" width="112" height="40" viewBox="0 0 112 40"><rect x="1.30" y="1.60" width="108.40" height="36.00" fill="none" stroke="#D3202B" stroke-width="1.4"/></svg>
<div class="b" style="left:644px;top:328px;width:22px;height:22px;border-radius:11px;background:#E8192C;box-shadow:1.5px 2px 2px rgba(0,0,0,.45)"></div>
<div class="b" style="left:904px;top:330px;width:22px;height:22px;border-radius:11px;background:#E8192C;box-shadow:1.5px 2px 2px rgba(0,0,0,.45)"></div>
<div class="b" style="left:1820px;top:959px;width:22px;height:22px;border-radius:11px;background:#E8192C;box-shadow:1.5px 2px 2px rgba(0,0,0,.45)"></div>
<span class="t" id="t0" style="left:931.7px;top:5px;font-size:12px;color:#FFFFFF;letter-spacing:0.23px;">Medicalinfo</span>
<span class="t" id="t1" style="left:75.7px;top:36px;font-size:12px;color:#2B579A;letter-spacing:0.14px;">Εισαγωγή</span>
<span class="t" id="t2" style="left:156.7px;top:36px;font-size:12px;color:#FFFFFF;letter-spacing:0.22px;">Τεχνητός Νεφρός</span>
<span class="t" id="t3" style="left:277.7px;top:36px;font-size:12px;color:#FFFFFF;letter-spacing:0.01px;">Φαρμακείο</span>
<span class="t" id="t4" style="left:362.7px;top:36px;font-size:12px;color:#FFFFFF;letter-spacing:0.11px;">Εκτυπώσεις</span>
<span class="t" id="t5" style="left:454.7px;top:36px;font-size:12px;color:#FFFFFF;letter-spacing:-0.03px;">Υποβολές Κλινικής</span>
<span class="t" id="t6" style="left:581.7px;top:36px;font-size:12px;color:#FFFFFF;letter-spacing:0.09px;">Υποβολές Αιμοκάθαρσης</span>
<span class="t" id="t7" style="left:744.7px;top:36px;font-size:12px;color:#FFFFFF;letter-spacing:0.16px;">Τιμολόγηση Περιστατικού</span>
<span class="t" id="t8" style="left:1808.7px;top:34px;font-size:12px;color:#FFFFFF;">Logout and L</span>
<span class="t" id="t9" style="left:24.7px;top:99px;font-size:12px;color:#3B3B3B;letter-spacing:-0.03px;">Ασθενείς</span>
<span class="t" id="t10" style="left:14.7px;top:114px;font-size:12px;color:#3B3B3B;letter-spacing:0.36px;">Πρόσωπα</span>
<span class="t" id="t11" style="left:95.7px;top:99px;font-size:12px;color:#3B3B3B;letter-spacing:-0.06px;">Υπόχρεοι</span>
<span class="t" id="t12" style="left:170.7px;top:99px;font-size:12px;color:#3B3B3B;letter-spacing:0.03px;">Γραφείο</span>
<span class="t" id="t13" style="left:170.7px;top:114px;font-size:12px;color:#3B3B3B;letter-spacing:-0.04px;">Κίνησης</span>
<span class="t" id="t14" style="left:235.7px;top:99px;font-size:12px;color:#3B3B3B;letter-spacing:0.31px;">Ιατρικός</span>
<span class="t" id="t15" style="left:230.7px;top:114px;font-size:12px;color:#3B3B3B;letter-spacing:-0.02px;">Φάκελος</span>
<span class="t" id="t16" style="left:301.7px;top:99px;font-size:12px;color:#3B3B3B;letter-spacing:0.19px;">Οικονομικός</span>
<span class="t" id="t17" style="left:311.7px;top:114px;font-size:12px;color:#3B3B3B;letter-spacing:-0.02px;">Φάκελος</span>
<span class="t" id="t18" style="left:384.7px;top:99px;font-size:12px;color:#3B3B3B;letter-spacing:0.27px;">Νοσηλευτικός</span>
<span class="t" id="t19" style="left:399.7px;top:114px;font-size:12px;color:#3B3B3B;letter-spacing:-0.02px;">Φάκελος</span>
<span class="t" id="t20" style="left:476.7px;top:99px;font-size:12px;color:#3B3B3B;letter-spacing:-0.28px;">Εργασίες</span>
<span class="t" id="t21" style="left:547.7px;top:99px;font-size:12px;color:#3B3B3B;letter-spacing:0.13px;">Εξωτερικά</span>
<span class="t" id="t22" style="left:556.7px;top:114px;font-size:12px;color:#3B3B3B;letter-spacing:0.20px;">Ιατρεία</span>
<span class="t" id="t23" style="left:619.7px;top:99px;font-size:12px;color:#3B3B3B;letter-spacing:0.13px;">Χρονοπρογραμματισμός</span>
<span class="t" id="t24" style="left:627.7px;top:114px;font-size:12px;color:#3B3B3B;letter-spacing:0.28px;">Εξωτερικών Ιατρείων</span>
<span class="t" id="t25" style="left:788.7px;top:99px;font-size:12px;color:#3B3B3B;letter-spacing:-0.07px;">Εκτέλεση</span>
<span class="t" id="t26" style="left:769.7px;top:114px;font-size:12px;color:#3B3B3B;letter-spacing:0.23px;">παραπεμπτικών</span>
<span class="t" id="t27" style="left:882.7px;top:99px;font-size:12px;color:#3B3B3B;letter-spacing:0.13px;">Χρονοπρογραμματισμός</span>
<span class="t" id="t28" style="left:1043.7px;top:99px;font-size:12px;color:#3B3B3B;letter-spacing:-0.09px;">Floor</span>
<span class="t" id="t29" style="left:1045.7px;top:114px;font-size:12px;color:#3B3B3B;">Plan</span>
<span class="t" id="t30" style="left:51.7px;top:133px;font-size:12px;color:#666666;letter-spacing:0.36px;">Πρόσωπα</span>
<span class="t" id="t31" style="left:480.7px;top:133px;font-size:12px;color:#666666;letter-spacing:0.36px;">Περιστατικό</span>
<span class="t" id="t32" style="left:882.7px;top:133px;font-size:12px;color:#666666;letter-spacing:0.13px;">Χρονοπρογραμματισμός</span>
<span class="t" id="t33" style="left:1032.7px;top:133px;font-size:12px;color:#666666;letter-spacing:-0.16px;">FloorPlan</span>
<span class="t" id="t34" style="left:10.7px;top:162px;font-size:11px;color:#3A3A3A;letter-spacing:-0.10px;">Dashboard</span>
<span class="t" id="t35" style="left:77.7px;top:161px;font-size:11px;color:#3A3A3A;letter-spacing:-0.21px;">Γραφείο Κίνησης</span>
<span class="t" id="t36" style="left:10.7px;top:190px;font-size:16px;color:#333;letter-spacing:-0.88px;">0028005</span>
<span class="t" id="t37" style="left:143.7px;top:191px;font-size:15.5px;color:#333;word-spacing:3px;letter-spacing:-1.17px;">ΑΚΑΛΟΡΙΖΟΥ ΕΙΡΗΝΗ</span>
<span class="t" id="t38" style="left:1367.7px;top:193px;font-size:12px;color:#F6F6F6;letter-spacing:0.11px;">Εκτυπώσεις</span>
<span class="t" id="t39" style="left:1470.7px;top:193px;font-size:12px;color:#F6F6F6;letter-spacing:0.08px;">Δυναμικές Εκτυπώσεις</span>
<span class="t" id="t40" style="left:1633.7px;top:193px;font-size:12px;color:#F6F6F6;letter-spacing:-0.28px;">Εργασίες</span>
<span class="t" id="t41" style="left:1806.7px;top:195px;font-size:11px;color:#222;letter-spacing:-0.54px;">Λίστα</span>
<span class="t" id="t42" style="left:51.7px;top:238px;font-size:11px;color:#333;letter-spacing:-0.09px;">Στοιχεία Περιστατικού</span>
<span class="t" id="t43" style="left:208.7px;top:238px;font-size:11px;color:#333;letter-spacing:-0.48px;">Διάγνωση/ΚΕΝ</span>
<span class="t" id="t44" style="left:330.7px;top:238px;font-size:11px;color:#333;letter-spacing:-0.16px;">Ασφαλιστικοί Φορείς</span>
<span class="t" id="t45" style="left:479.7px;top:238px;font-size:11px;color:#333;letter-spacing:-0.13px;">Άδειες - Εγκρίσεις</span>
<span class="t" id="t46" style="left:615.7px;top:238px;font-size:11px;color:#333;letter-spacing:-0.17px;">Νοσηλεία - Συνεδρίες</span>
<span class="t" id="t47" style="left:769.7px;top:238px;font-size:11px;color:#333;letter-spacing:-0.12px;">Έγγραφα</span>
<span class="t" id="t48" style="left:27.7px;top:284px;font-size:11px;color:#333;font-weight:700;letter-spacing:0.66px;">Περιστατικό</span>
<span class="t" id="t49" style="left:32.7px;top:324px;font-size:11px;color:#333333;font-weight:700;letter-spacing:0.18px;">Κωδικός</span>
<span class="t" id="t50" style="left:156.7px;top:324px;font-size:11px;color:#333333;letter-spacing:-0.30px;">0028005</span>
<span class="t" id="t51" style="left:281.7px;top:324px;font-size:11px;color:#333333;font-weight:700;letter-spacing:0.28px;">Τύπος</span>
<span class="t" id="t52" style="left:352.7px;top:325px;font-size:11px;color:#333333;letter-spacing:-0.26px;">Εσωτερικός</span>
<span class="t" id="t53" style="left:499.7px;top:324px;font-size:11px;color:#333333;font-weight:700;letter-spacing:0.43px;">Κατηγορία</span>
<span class="t" id="t54" style="left:569.7px;top:325px;font-size:11px;color:#333333;letter-spacing:0.04px;">Άμεσος</span>
<span class="t" id="t55" style="left:706.7px;top:324px;font-size:11px;color:#333333;letter-spacing:-0.13px;">Σε Στατιστική</span>
<span class="t" id="t56" style="left:32.7px;top:352px;font-size:11px;color:#333333;font-weight:700;letter-spacing:0.16px;">Ημερομηνία Εισόδου</span>
<span class="t" id="t57" style="left:155.7px;top:352px;font-size:11px;color:#333333;letter-spacing:0.01px;">18/4/2020</span>
<span class="t" id="t58" style="left:281.7px;top:352px;font-size:11px;color:#333333;letter-spacing:-0.39px;">Ώρα Εισόδου</span>
<span class="t" id="t59" style="left:352.7px;top:352px;font-size:11px;color:#333333;letter-spacing:0.17px;">10:27:21</span>
<span class="t" id="t60" style="left:498.7px;top:352px;font-size:11px;color:#333333;letter-spacing:-0.41px;">Εισιτήριο</span>
<span class="t" id="t61" style="left:568.7px;top:352px;font-size:11px;color:#333333;letter-spacing:-0.04px;">2020001961971</span>
<span class="t" id="t62" style="left:809.7px;top:353px;font-size:11px;color:#333333;letter-spacing:-0.19px;">Αναγγελία Εισιτηρίου</span>
<span class="t" id="t63" style="left:31.7px;top:380px;font-size:11px;color:#333333;letter-spacing:-0.23px;">Ημερομηνία Εξόδου</span>
<span class="t" id="t64" style="left:281.7px;top:380px;font-size:11px;color:#333333;letter-spacing:-0.48px;">Ώρα Εξόδου</span>
<span class="t" id="t65" style="left:498.7px;top:380px;font-size:11px;color:#333333;letter-spacing:-0.29px;">Εξιτήριο</span>
<span class="t" id="t66" style="left:812.7px;top:381px;font-size:11px;color:#333333;letter-spacing:-0.13px;">Αναγγελία Εξιτηρίου</span>
<span class="t" id="t67" style="left:920.7px;top:380px;font-size:11px;color:#333333;letter-spacing:-0.21px;">Ημέρες Νοσηλείας</span>
<span class="t" id="t68" style="left:1017.7px;top:378px;font-size:14px;color:#333;font-weight:700;letter-spacing:0.42px;">32</span>
<span class="t" id="t69" style="left:32.7px;top:408px;font-size:11px;color:#1B6ED6;letter-spacing:-0.10px;">Αιτολογία Εισόδου</span>
<span class="t" id="t70" style="left:510.7px;top:408px;font-size:11px;color:#1B6ED6;font-weight:700;letter-spacing:0.02px;">Θεράπων</span>
<span class="t" id="t71" style="left:580.7px;top:408px;font-size:11px;color:#333333;letter-spacing:-0.26px;">ΓΑΤΙΔΗΣ ΓΕΩΡΓΙΟΣ</span>
<span class="t" id="t72" style="left:32.7px;top:436px;font-size:11px;color:#1B6ED6;letter-spacing:0.13px;">Αιτολογία Εξόδου</span>
<span class="t" id="t73" style="left:509.7px;top:436px;font-size:11px;color:#1B6ED6;letter-spacing:-0.39px;">Συνθεράπων</span>
<span class="t" id="t74" style="left:32.7px;top:464px;font-size:11px;color:#1B6ED6;letter-spacing:-0.08px;">Διακομιδή</span>
<span class="t" id="t75" style="left:509.7px;top:464px;font-size:11px;color:#1B6ED6;letter-spacing:-0.36px;">Συστήσας</span>
<span class="t" id="t76" style="left:27.7px;top:517px;font-size:11px;color:#333333;letter-spacing:-0.35px;">Ασθενής</span>
<span class="t" id="t77" style="left:82.7px;top:517px;font-size:11px;color:#333333;letter-spacing:-0.44px;">Υπόχρεος</span>
<span class="t" id="t78" style="left:29.7px;top:551px;font-size:11px;color:#1B6ED6;font-weight:700;letter-spacing:0.18px;">Κωδικός</span>
<span class="t" id="t79" style="left:127.7px;top:551px;font-size:11px;color:#333333;letter-spacing:-0.34px;">022023</span>
<span class="t" id="t80" style="left:281.7px;top:550px;font-size:11px;color:#555;">...</span>
<span class="t" id="t81" style="left:306.7px;top:550px;font-size:11px;color:#1B6ED6;font-weight:700;letter-spacing:0.38px;">Ονοματεπώνυμο</span>
<span class="t" id="t82" style="left:411.7px;top:551px;font-size:11px;color:#333333;letter-spacing:-0.67px;">ΑΚΑΛΟΡΙΖΟΥ ΕΙΡΗΝΗ</span>
<span class="t" id="t83" style="left:776.7px;top:550px;font-size:11px;color:#555;">...</span>
<span class="t" id="t84" style="left:799.7px;top:551px;font-size:11px;color:#333333;letter-spacing:-0.94px;">ΑΜΚΑ</span>
<span class="t" id="t85" style="left:837.7px;top:551px;font-size:11px;color:#333333;letter-spacing:-0.23px;">01014200666</span>
<span class="t" id="t86" style="left:29.7px;top:579px;font-size:11px;color:#333333;letter-spacing:-0.07px;">Ημ/νία Γέννησης</span>
<span class="t" id="t87" style="left:127.7px;top:579px;font-size:11px;color:#333333;letter-spacing:0.17px;">1/1/1942</span>
<span class="t" id="t88" style="left:304.7px;top:579px;font-size:11px;color:#333333;letter-spacing:-0.20px;">Όνομα Πατρός</span>
<span class="t" id="t89" style="left:384.7px;top:579px;font-size:11px;color:#333333;letter-spacing:-0.63px;">ΓΕΩΡΓΙΟΣ</span>
<span class="t" id="t90" style="left:557.7px;top:579px;font-size:11px;color:#333333;letter-spacing:-0.11px;">Όνομα Μητρός</span>
<span class="t" id="t91" style="left:638.7px;top:579px;font-size:11px;color:#333333;letter-spacing:-0.81px;">ΜΑΡΙΑ</span>
<span class="t" id="t92" style="left:29.7px;top:607px;font-size:11px;color:#333333;letter-spacing:-0.42px;">Φύλο</span>
<span class="t" id="t93" style="left:128.7px;top:608px;font-size:11px;color:#333333;letter-spacing:-0.31px;">Θήλυ</span>
<span class="t" id="t94" style="left:304.7px;top:607px;font-size:11px;color:#333333;letter-spacing:0.12px;">Α.Δ.Τ.</span>
<span class="t" id="t95" style="left:384.7px;top:607px;font-size:11px;color:#333333;letter-spacing:0.06px;">ΙΑ 719621</span>
<span class="t" id="t96" style="left:556.7px;top:607px;font-size:11px;color:#333333;letter-spacing:-0.04px;">Πρωτόκολλο</span>
<span class="t" id="t97" style="left:30.7px;top:635px;font-size:11px;color:#333333;letter-spacing:-0.28px;">Διεύθυνση</span>
<span class="t" id="t98" style="left:126.7px;top:635px;font-size:11px;color:#333333;letter-spacing:-0.68px;">ΦΑΡΣΑΛΩΝ</span>
<span class="t" id="t99" style="left:381.7px;top:635px;font-size:11px;color:#333333;letter-spacing:-0.17px;">Αριθμός Διεύθυνσης</span>
<span class="t" id="t100" style="left:487.7px;top:635px;font-size:11px;color:#333333;letter-spacing:-0.94px;">15</span>
<span class="t" id="t101" style="left:576.7px;top:635px;font-size:11px;color:#333333;letter-spacing:-0.31px;">Δήμος</span>
<span class="t" id="t102" style="left:616.7px;top:635px;font-size:11px;color:#333333;letter-spacing:-0.43px;">ΛΑΡΙΣΑΙΩΝ</span>
<span class="t" id="t103" style="left:29.7px;top:663px;font-size:11px;color:#333333;letter-spacing:-0.49px;">Πόλη</span>
<span class="t" id="t104" style="left:379.7px;top:663px;font-size:11px;color:#333333;letter-spacing:-0.21px;">Περιοχή</span>
<span class="t" id="t105" style="left:30.7px;top:691px;font-size:11px;color:#333333;letter-spacing:0.14px;">Τηλ.</span>
<span class="t" id="t106" style="left:304.7px;top:691px;font-size:11px;color:#333333;letter-spacing:0.05px;">Τηλ. 2</span>
<span class="t" id="t107" style="left:555.7px;top:691px;font-size:11px;color:#333333;letter-spacing:-0.17px;">Κινητό</span>
<span class="t" id="t108" style="left:30.7px;top:719px;font-size:11px;color:#333333;letter-spacing:-0.16px;">Οικογ. Κατάσταση</span>
<span class="t" id="t109" style="left:369.7px;top:719px;font-size:11px;color:#333333;letter-spacing:-0.16px;">Δραστηριότητα</span>
<span class="t" id="t110" style="left:1756.7px;top:987px;font-size:11px;color:#9B9B9B;letter-spacing:-0.58px;">Επικύρωση</span>
<span class="t" id="t111" style="left:1858.7px;top:987px;font-size:11px;color:#9B9B9B;">Ακύρωση</span>
<span class="t" id="t112" style="left:652.7px;top:334px;font-size:12px;color:#FFFFFF;font-weight:700;">2</span>
<span class="t" id="t113" style="left:911.7px;top:336px;font-size:12px;color:#FFFFFF;font-weight:700;">1</span>
<span class="t" id="t114" style="left:1827.7px;top:965px;font-size:12px;color:#FFFFFF;font-weight:700;">3</span>
</body></html>
